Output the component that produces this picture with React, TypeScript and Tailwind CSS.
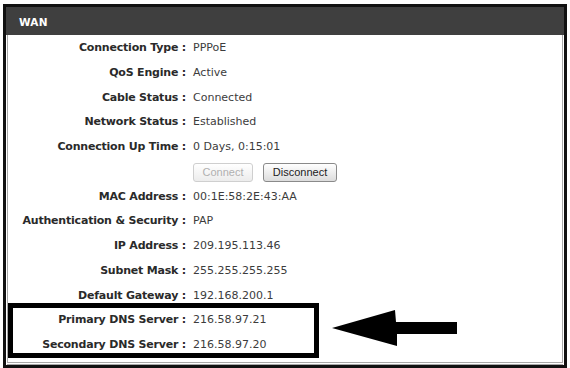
import React from "react";

const rows: { label: string; value?: string; buttons?: boolean }[] = [
  { label: "Connection Type", value: "PPPoE" },
  { label: "QoS Engine", value: "Active" },
  { label: "Cable Status", value: "Connected" },
  { label: "Network Status", value: "Established" },
  { label: "Connection Up Time", value: "0 Days, 0:15:01" },
  { label: "", buttons: true },
  { label: "MAC Address", value: "00:1E:58:2E:43:AA" },
  { label: "Authentication & Security", value: "PAP" },
  { label: "IP Address", value: "209.195.113.46" },
  { label: "Subnet Mask", value: "255.255.255.255" },
  { label: "Default Gateway", value: "192.168.200.1" },
  { label: "Primary DNS Server", value: "216.58.97.21" },
  { label: "Secondary DNS Server", value: "216.58.97.20" },
];

export default function App() {
  return (
    <div className="relative w-[570px] h-[368px] overflow-hidden bg-white pt-[4px] font-['DejaVu_Sans',sans-serif]">
      <div className="ml-[3px] w-[564px] h-[364px] border-[3px] border-[#111] flex flex-col">
        <div className="h-[28px] bg-[#3f3f3f] flex items-center pl-[13px] pt-[3px]">
          <span className="text-white font-bold text-[10.5px] tracking-[0.2px]">WAN</span>
        </div>
        <div className="flex flex-col flex-1">
          <div className="h-[328px] mx-[1px] border-x border-b border-[#a8a8a8] pt-[1px]">
            {rows.map((r, i) => (
              <div key={i} className="flex items-center h-[24.75px]">
                <div className="w-[178px] shrink-0 text-right text-[11px] font-bold text-[#2a2a2a] tracking-[-0.2px] whitespace-nowrap">
                  {r.buttons ? "" : `${r.label} :`}
                </div>
                <div className="pl-[7px] text-[11px] text-[#3c3c3c] whitespace-nowrap">
                  {r.buttons ? (
                    <div className="flex gap-[10px] font-['Liberation_Sans',sans-serif]">
                      <div className="w-[60px] h-[19px] rounded-[3px] border border-[#cfcfcf] bg-gradient-to-b from-white to-[#ececec] text-[#b0b0b0] text-[11px] flex items-center justify-center">
                        Connect
                      </div>
                      <div className="w-[74px] h-[19px] rounded-[3px] border border-[#8a8a8a] bg-gradient-to-b from-white to-[#dcdcdc] text-[#222] text-[11px] flex items-center justify-center">
                        Disconnect
                      </div>
                    </div>
                  ) : (
                    r.value
                  )}
                </div>
              </div>
            ))}
          </div>
          <div className="h-[1px]" />
          <div className="h-[1px] mx-[1px] bg-[#a8a8a8]" />
        </div>
      </div>

      <div className="absolute left-[8px] top-[303px] w-[311px] h-[55px] border-[5px] border-black" />

      <svg className="absolute left-0 top-0" width="570" height="368" viewBox="0 0 570 368">
        <polygon
          points="332,328 395,310 396,322 457,322 457,334 397,334 397,346"
          fill="#000"
        />
      </svg>
    </div>
  );
}
